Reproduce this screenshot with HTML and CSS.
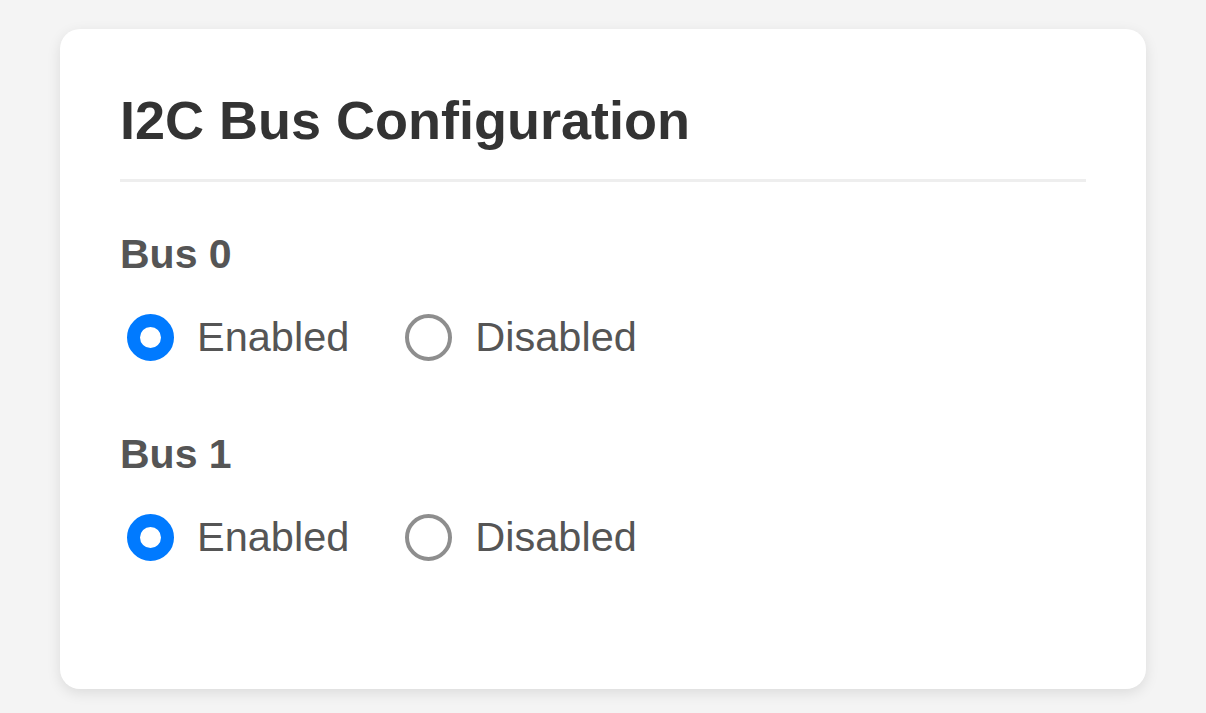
FILE: index.html
```html
<!DOCTYPE html>
<html lang="en">
<head>
  <meta charset="UTF-8">
  <meta name="viewport" content="width=device-width, initial-scale=1.0">
  <title>I2C Bus Configuration</title>
  <link rel="stylesheet" href="styles.css">
</head>
<body>
  <div class="card">
    <h1>I2C Bus Configuration</h1>

    <!-- Bus 0 -->
    <div class="bus-group">
      <div class="bus-label">Bus 0</div>
      <div class="options">
        <label class="option"><input type="radio" name="bus0" value="enabled" checked> Enabled</label>
        <label class="option"><input type="radio" name="bus0" value="disabled"> Disabled</label>
      </div>
    </div>

    <!-- Bus 1 -->
    <div class="bus-group">
      <div class="bus-label">Bus 1</div>
      <div class="options">
        <label class="option"><input type="radio" name="bus1" value="enabled" checked> Enabled</label>
        <label class="option"><input type="radio" name="bus1" value="disabled"> Disabled</label>
      </div>
    </div>
  </div>
</body>
</html>
```

FILE: styles.css
```css
body {
  font-family: "Liberation Sans", Arial, sans-serif;
  background-color: #f4f4f4;
  margin: 0;
  padding: 29px 60px;
}
.card {
  background-color: #ffffff;
  border-radius: 20px;
  box-shadow: 0 4px 14px rgba(0, 0, 0, 0.1);
  padding: 60px;
  height: 540px;
}
h1 {
  margin: 0 0 49px 0;
  font-size: 54px;
  line-height: 62px;
  color: #333333;
  padding-bottom: 28px;
  border-bottom: 3px solid #eeeeee;
}
.bus-group {
  margin-bottom: 70px;
}
.bus-label {
  font-size: 41px;
  line-height: 47px;
  font-weight: bold;
  color: #555555;
  margin-bottom: 35px;
}
.options {
  display: flex;
  align-items: center;
  gap: 56px;
  padding-left: 7px;
}
.option {
  display: flex;
  align-items: center;
  gap: 23px;
  font-size: 41.5px;
  line-height: 48px;
  color: #555555;
  cursor: pointer;
}
.option input {
  appearance: none;
  -webkit-appearance: none;
  margin: 0;
  width: 47px;
  height: 47px;
  border-radius: 50%;
  border: 4px solid #8e8e8e;
  background-color: #ffffff;
  box-sizing: border-box;
}
.option input:checked {
  border: 13.5px solid #007aff;
}
```
